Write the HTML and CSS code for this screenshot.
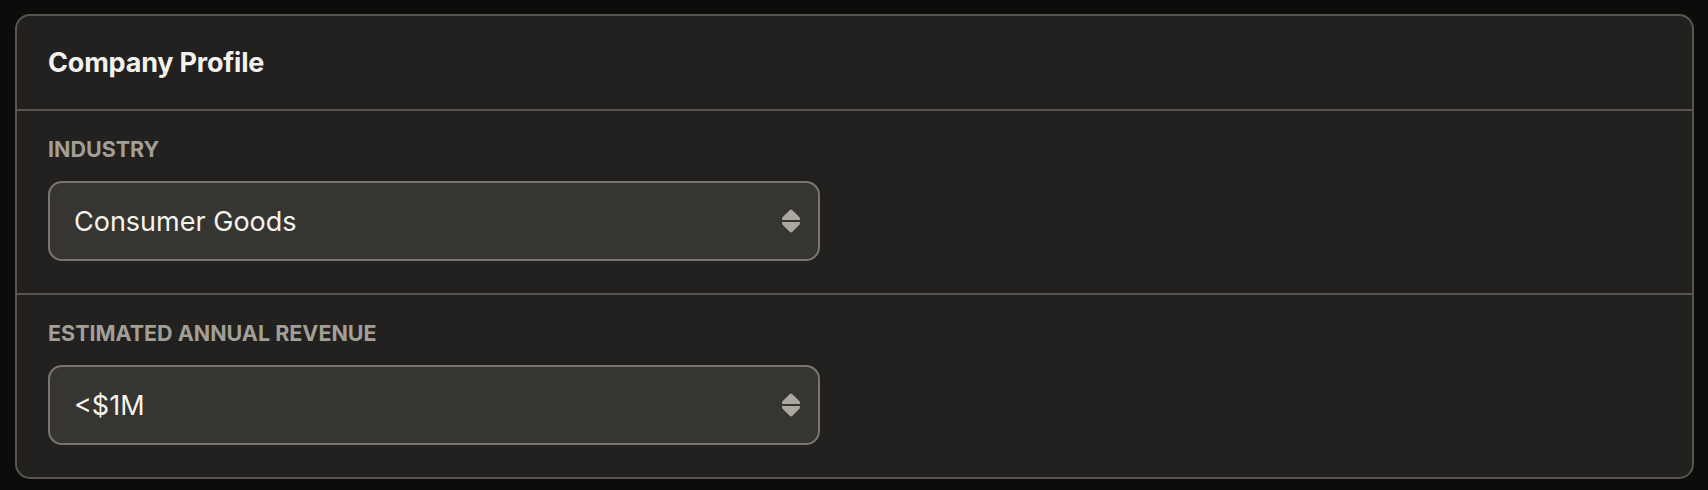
FILE: index.html
```html
<!DOCTYPE html>
<html lang="en">
<head>
<meta charset="utf-8">
<title>Company Profile</title>
<link rel="stylesheet" href="styles.css">
</head>
<body>
  <section class="card">
    <header class="card-header">
      <h2 class="card-title">Company Profile</h2>
    </header>
    <div class="field">
      <div class="field-label">INDUSTRY</div>
      <div class="select">
        <span class="select-value">Consumer Goods</span>
        <svg class="select-icon" width="18" height="24" viewBox="0 0 18 24" aria-hidden="true">
          <path d="M7.6 1.2 Q9 -0.2 10.4 1.2 L17 7.8 Q18 8.8 18 10 L18 11 L0 11 L0 10 Q0 8.8 1 7.8 Z" fill="#a9a79e"/>
          <path d="M7.6 22.8 Q9 24.2 10.4 22.8 L17 16.2 Q18 15.2 18 14 L18 13 L0 13 L0 14 Q0 15.2 1 16.2 Z" fill="#a9a79e"/>
        </svg>
      </div>
    </div>
    <div class="field">
      <div class="field-label">ESTIMATED ANNUAL REVENUE</div>
      <div class="select">
        <span class="select-value">&lt;$1M</span>
        <svg class="select-icon" width="18" height="24" viewBox="0 0 18 24" aria-hidden="true">
          <path d="M7.6 1.2 Q9 -0.2 10.4 1.2 L17 7.8 Q18 8.8 18 10 L18 11 L0 11 L0 10 Q0 8.8 1 7.8 Z" fill="#a9a79e"/>
          <path d="M7.6 22.8 Q9 24.2 10.4 22.8 L17 16.2 Q18 15.2 18 14 L18 13 L0 13 L0 14 Q0 15.2 1 16.2 Z" fill="#a9a79e"/>
        </svg>
      </div>
    </div>
  </section>
</body>
</html>
```

FILE: styles.css
```css
* {
  box-sizing: border-box;
}

html, body {
  background: #0c0c0b;
}

body {
  margin: 0;
  padding: 14px 14px 12px 15px;
  font-family: Inter, "Noto Sans", sans-serif;
}

.card {
  background: #222120;
  border: 2px solid #57554e;
  border-radius: 15px;
  overflow: hidden;
}

.card-header {
  height: 95px;
  display: flex;
  align-items: center;
  padding: 0 31px;
  border-bottom: 2px solid #57554e;
}

.card-title {
  margin: 0;
  font-size: 27px;
  font-weight: 700;
  color: #f3f2ec;
  letter-spacing: -0.2px;
}

.field {
  display: flex;
  flex-direction: column;
  gap: 19px;
  padding: 25px 31px 32px;
}

.field + .field {
  border-top: 2px solid #57554e;
}

.field-label {
  font-size: 21.5px;
  line-height: 26px;
  font-weight: 700;
  color: #a19f96;
  letter-spacing: 0;
}

.select {
  width: 772px;
  height: 80px;
  display: flex;
  align-items: center;
  justify-content: space-between;
  padding: 0 18px 0 24px;
  background: #363531;
  border: 2px solid #78766d;
  border-radius: 14px;
}

.select-value {
  font-size: 27px;
  font-weight: 400;
  color: #f5f4ee;
}

.select-icon {
  display: block;
  flex: none;
}
```
